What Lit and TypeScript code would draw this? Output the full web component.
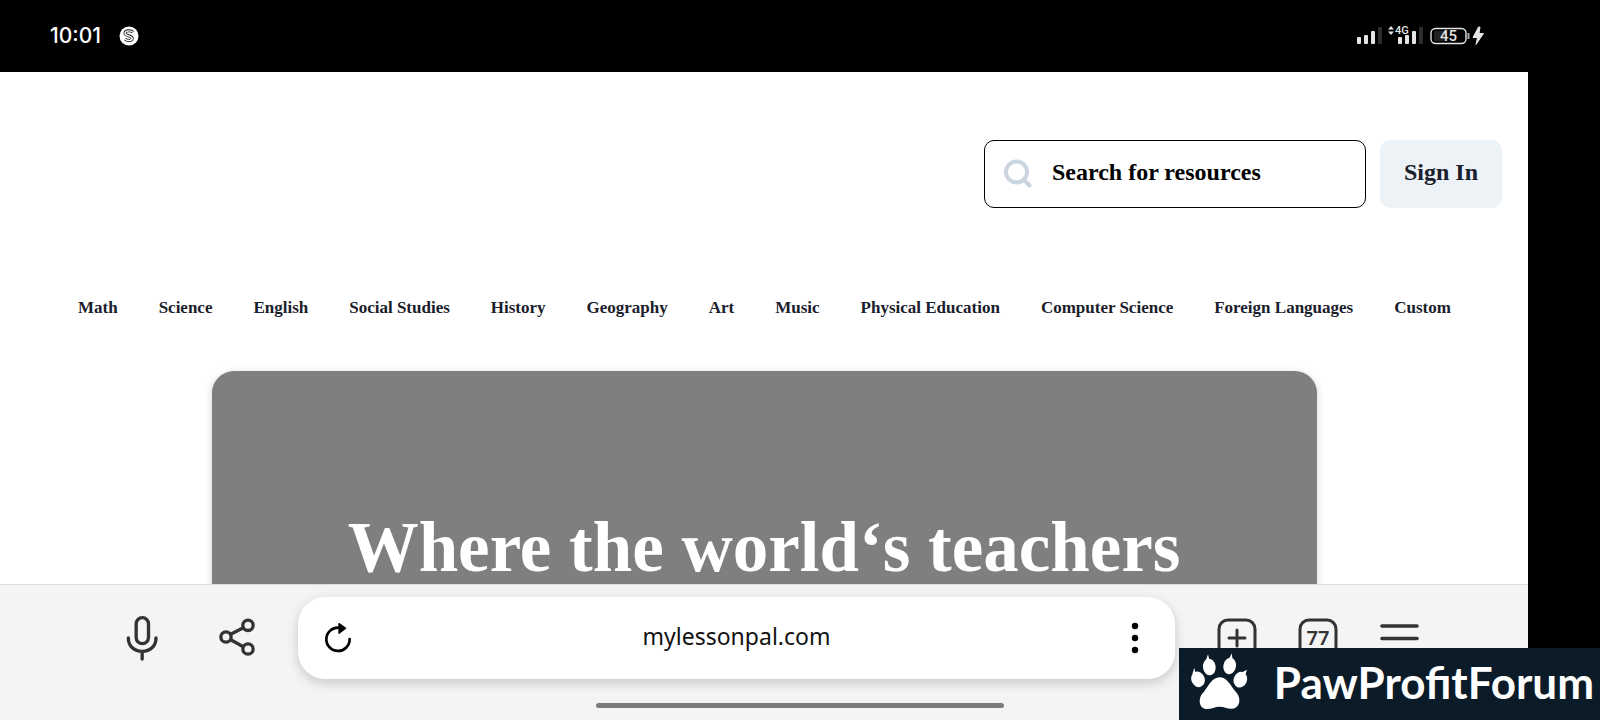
import { LitElement, html, css, svg } from "lit";
import { customElement } from "lit/decorators.js";

const SUBJECTS = [
  "Math", "Science", "English", "Social Studies", "History", "Geography",
  "Art", "Music", "Physical Education", "Computer Science", "Foreign Languages", "Custom",
];

@customElement("status-bar")
class StatusBar extends LitElement {
  static styles = css`
    :host {
      display: flex;
      align-items: center;
      justify-content: space-between;
      height: 72px;
      padding: 0 116px 0 50px;
      background: #000;
      color: #fff;
      font-family: "Inter", sans-serif;
    }
    .left { display: flex; align-items: center; gap: 18px; }
    .time { font-size: 21px; line-height: 28px; font-weight: 500; }
    svg { display: block; }
    .net { font: 500 11px "Roboto", sans-serif; fill: #e4e4e4; }
    .level { font: 500 15px "Roboto", sans-serif; fill: #e4e4e4; }
  `;

  private bars(x: number) {
    return [7, 9, 13, 17].map(
      (h, i) => svg`<rect x=${x + i * 7} y=${20 - h} width="4" height=${h} rx="1" fill=${i < 3 ? "#e4e4e4" : "#2c2c2c"}></rect>`
    );
  }

  render() {
    return html`
      <div class="left">
        <span class="time">10:01</span>
        <svg width="20" height="20" viewBox="0 0 20 20" aria-hidden="true">
          <circle cx="10" cy="10" r="9.5" fill="#fff" />
          <path d="M14 6.200C12.600 4.600 6.400 3.900 6 7.200C5.800 10.300 13.300 9.300 13.200 12.400C13 15.200 8 14.800 6 13.200" fill="none" stroke="#111" stroke-width="3" />
          <path d="M14 6.200C12.600 4.600 6.400 3.900 6 7.200C5.800 10.300 13.300 9.300 13.200 12.400C13 15.200 8 14.800 6 13.200" fill="none" stroke="#fff" stroke-width="1.400" />
        </svg>
      </div>
      <svg width="128" height="24" viewBox="0 0 128 24" aria-label="Signal and battery">
        ${this.bars(1)}
        ${this.bars(42)}
        <rect x="39" y="0" width="15" height="11" fill="#000" />
        <path d="M32 5.500L35 2L38 5.500zM32 7.500L35 11L38 7.500z" fill="#e4e4e4" />
        <text class="net" x="39" y="10">4G</text>
        <rect x="75" y="4.500" width="35" height="15" rx="4.500" fill="none" stroke="#e4e4e4" stroke-width="1.400" />
        <rect x="78" y="7" width="13" height="10" rx="2" fill="#222" />
        <rect x="111.500" y="9" width="2" height="6" fill="#a8a8a8" />
        <text class="level" x="84" y="17">45</text>
        <path d="M122.500 3L117 13.500L121.500 13.500L120 20.500L127.500 9.500L123 9.500L124 3z" fill="#e4e4e4" stroke="#e4e4e4" />
      </svg>
    `;
  }
}

@customElement("lesson-page")
class LessonPage extends LitElement {
  static styles = css`
    :host {
      display: block;
      overflow: hidden;
      background: #fff;
      color: #1a202c;
      font-family: "Liberation Serif", serif;
      font-weight: 700;
    }
    .top { display: flex; justify-content: flex-end; gap: 14px; padding: 68px 26px 0; }
    .search {
      display: flex;
      align-items: center;
      gap: 20px;
      box-sizing: border-box;
      width: 382px;
      height: 68px;
      padding: 0 20px 0 19px;
      border: 1px solid #000;
      border-radius: 10px;
    }
    .search svg { flex: none; }
    input {
      flex: 1;
      min-width: 0;
      border: 0;
      padding: 0 0 4px;
      outline: 0;
      background: none;
      font: inherit;
      font-size: 24px;
      line-height: 32px;
      color: #000;
    }
    input::placeholder { color: #000; opacity: 1; }
    .signin {
      padding: 0 24px 4px;
      border: 0;
      border-radius: 10px;
      background: #edf2f7;
      color: #1a202c;
      font: inherit;
      font-size: 24px;
      line-height: 32px;
    }
    nav {
      display: flex;
      justify-content: space-between;
      padding: 88px 77px 51px 78px;
      font-size: 17px;
      line-height: 24px;
      white-space: nowrap;
    }
    nav a { color: inherit; text-decoration: none; }
    .hero {
      box-sizing: border-box;
      max-width: 1105px;
      min-height: 480px;
      margin: 0 auto;
      padding-top: 140px;
      border-radius: 22px;
      background: #7f7f7f;
      box-shadow: 0 2px 8px rgba(0, 0, 0, 0.16);
      text-align: center;
    }
    h1 { margin: 0; color: #fff; font-size: 71px; line-height: 72px; }
  `;

  render() {
    return html`
      <header class="top">
        <label class="search">
          <svg width="28" height="30" viewBox="0 0 28 30" fill="none" stroke="#cbd5e0" stroke-width="4" stroke-linecap="round" aria-hidden="true">
            <circle cx="12.500" cy="13" r="10.500" />
            <path d="M20 21L25.500 26.500" />
          </svg>
          <input type="search" placeholder="Search for resources" aria-label="Search for resources" />
        </label>
        <button class="signin">Sign In</button>
      </header>
      <nav>${SUBJECTS.map((s) => html`<a href="#">${s}</a>`)}</nav>
      <section class="hero"><h1>Where the world‘s teachers</h1></section>
    `;
  }
}

@customElement("browser-bar")
class BrowserBar extends LitElement {
  static styles = css`
    :host {
      display: flex;
      align-items: flex-start;
      box-sizing: border-box;
      height: 136px;
      padding: 12px 108px 0 126px;
      border-top: 1px solid #dcdcdc;
      background: #f4f4f4;
      font-family: "Noto Sans", sans-serif;
    }
    button {
      display: flex;
      align-items: center;
      justify-content: center;
      height: 82px;
      padding: 0;
      border: 0;
      background: none;
      color: #333;
    }
    .group { display: flex; }
    .tools { gap: 60px; margin-right: 42px; }
    .tabs { gap: 41px; margin-left: 42px; }
    .address {
      flex: 1;
      display: flex;
      align-items: center;
      height: 82px;
      padding: 0 26px;
      box-sizing: border-box;
      border-radius: 27px;
      background: #fff;
      box-shadow: 0 4px 12px rgba(0, 0, 0, 0.18);
    }
    .address button { width: 28px; color: #000; }
    .url {
      flex: 1;
      text-align: center;
      color: #111;
      font-size: 23px;
      line-height: 32px;
      padding-bottom: 4px;
    }
    .count { font: 600 20px "Noto Sans", sans-serif; fill: #333; }
  `;

  render() {
    return html`
      <div class="group tools">
        <button aria-label="Voice search">
          <svg width="32" height="46" viewBox="109 105 96 138" fill="none" stroke="currentColor" stroke-width="10" stroke-linecap="round">
            <rect x="139.500" y="113" width="37" height="78" rx="18.500" />
            <path d="M116 174C116 199 134 214 157.500 214S199 199 199 174M157.500 215V237" />
          </svg>
        </button>
        <button aria-label="Share">
          <svg width="38" height="40" viewBox="383 118 114 120" fill="none" stroke="currentColor" stroke-width="10">
            <circle cx="407" cy="175" r="15.500" />
            <circle cx="473" cy="140" r="15.500" />
            <circle cx="473" cy="211" r="15.500" />
            <path d="M421 167L459 147M421 183L459 204" />
          </svg>
        </button>
      </div>
      <div class="address">
        <button aria-label="Reload">
          <svg width="28" height="31" viewBox="705 129 84 93">
            <path d="M750 143A35 35 0 1 0 782 177" fill="none" stroke="currentColor" stroke-width="8" stroke-linecap="round" />
            <path d="M750 131L770 145L750 160z" fill="currentColor" stroke="currentColor" stroke-width="4" stroke-linejoin="round" />
          </svg>
        </button>
        <span class="url">mylessonpal.com</span>
        <button aria-label="More">
          <svg width="8" height="32" viewBox="0 0 8 32" fill="currentColor">
            <circle cx="4" cy="4" r="3.200" /><circle cx="4" cy="16" r="3.200" /><circle cx="4" cy="28" r="3.200" />
          </svg>
        </button>
      </div>
      <div class="group tabs">
        <button aria-label="New tab">
          <svg width="40" height="40" viewBox="0 0 40 40" fill="none" stroke="currentColor" stroke-width="3" stroke-linecap="round">
            <rect x="2" y="2" width="36" height="36" rx="9" />
            <path d="M20 12V28M12 20H28" />
          </svg>
        </button>
        <button aria-label="Tabs">
          <svg width="40" height="40" viewBox="0 0 40 40">
            <rect x="2" y="2" width="36" height="36" rx="9" fill="none" stroke="currentColor" stroke-width="3" />
            <text class="count" x="20" y="27" text-anchor="middle">77</text>
          </svg>
        </button>
        <button aria-label="Menu">
          <svg width="41" height="40" viewBox="0 0 41 40" stroke="currentColor" stroke-width="3.600" stroke-linecap="round">
            <path d="M3 8H38M3 20.500H38M3 33H38" />
          </svg>
        </button>
      </div>
    `;
  }
}

@customElement("app-root")
class AppRoot extends LitElement {
  static styles = css`
    :host {
      display: flex;
      flex-direction: column;
      position: relative;
      height: 100vh;
      overflow: hidden;
      background: #000;
    }
    .screen { flex: 1; display: flex; flex-direction: column; min-height: 0; margin-right: 72px; }
    lesson-page { flex: 1; min-height: 0; }
    browser-bar { flex: none; }
    .handle {
      position: absolute;
      left: 50%;
      bottom: 12px;
      width: 408px;
      height: 5px;
      margin-left: -204px;
      border-radius: 3px;
      background: #7b7b7b;
    }
    .brand {
      position: absolute;
      right: 0;
      bottom: 0;
      display: flex;
      align-items: center;
      justify-content: space-between;
      box-sizing: border-box;
      width: 421px;
      height: 72px;
      padding: 0 6px 5px 11px;
      background: #0c1b28;
      color: #fff;
      font: 700 44px "Lato", sans-serif;
    }
    .brand svg { flex: none; }
  `;

  render() {
    return html`
      <status-bar></status-bar>
      <main class="screen">
        <lesson-page></lesson-page>
        <browser-bar></browser-bar>
      </main>
      <div class="handle"></div>
      <div class="brand">
        <svg width="58" height="57" viewBox="270 218 174 171" fill="#fff" aria-hidden="true">
          <ellipse cx="294" cy="297" rx="20" ry="24" transform="rotate(-20 294 297)" />
          <ellipse cx="328" cy="260" rx="19" ry="25" transform="rotate(-8 328 260)" />
          <ellipse cx="389" cy="257" rx="19" ry="25" transform="rotate(10 389 257)" />
          <ellipse cx="421" cy="298" rx="20" ry="24" transform="rotate(20 421 298)" />
          <path d="M277 281L283 262L286 277zM317 242L324 222L328 238zM388 234L395 219L398 240zM426 276L441 268L436 284z" />
          <path d="M359 291C380 291 392 315 405 332C427 352 420 386 395 385C380 385 372 379 359 379C345 379 335 386 321 386C296 386 292 352 312 334C326 317 336 291 359 291z" />
        </svg>
        <span>PawProfitForum</span>
      </div>
    `;
  }
}
